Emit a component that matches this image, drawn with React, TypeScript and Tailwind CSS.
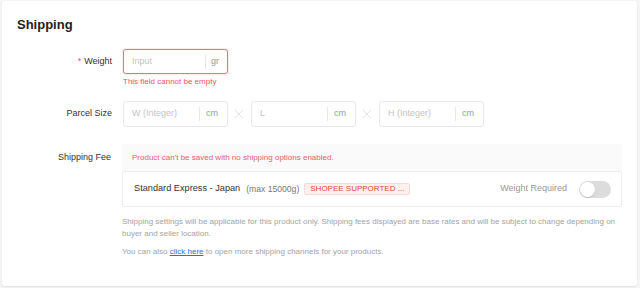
import { X } from "lucide-react";

function SuffixInput({ placeholder, unit, error, suffixPad }: { placeholder: string; unit: string; error?: boolean; suffixPad: string }) {
  return (
    <div
      className={`flex items-center w-[105px] rounded-[3px] border bg-white ${
        error ? "h-[25px] border-[#f4707f] shadow-[0_0_0_1px_rgba(244,112,127,0.15)]" : "h-[26px] border-[#e8e8e8]"
      }`}
    >
      <span className="flex-1 pl-[8px] text-[9px] text-[#c4c4c4]">{placeholder}</span>
      <span className="h-[14px] w-px bg-[#e8e8e8]" />
      <span className={`${suffixPad} text-[9px] text-[#999]`}>{unit}</span>
    </div>
  );
}

export default function App() {
  return (
    <div className="w-[640px] h-[288px] bg-[#f5f5f5] pt-[1px] pl-[2px] font-['Liberation_Sans',Arial,sans-serif]">
      <div className="w-[635px] h-[285px] bg-white rounded-[3px] shadow-[0_1px_2px_rgba(0,0,0,0.08)] pl-[15px] pt-[16px]">
        <h1 className="text-[13px] leading-[16px] font-bold text-[#222]">Shipping</h1>

        {/* Weight */}
        <div className="mt-[16px] flex">
          <div className="w-[95px] h-[25px] flex items-center justify-end text-[9px] text-[#333]">
            <span className="text-[#f0506e] mr-[3px]">*</span>Weight
          </div>
          <div className="ml-[11px]">
            <SuffixInput placeholder="Input" unit="gr" error suffixPad="pl-[5px] pr-[8px]" />
            <p className="mt-[3px] text-[8px] leading-[10px] text-[#f0506e]">This field cannot be empty</p>
          </div>
        </div>

        {/* Parcel size */}
        <div className="mt-[14px] flex items-center">
          <div className="w-[95px] text-right text-[9px] text-[#333]">Parcel Size</div>
          <div className="ml-[11px] flex items-center">
            <SuffixInput placeholder="W (Integer)" unit="cm" suffixPad="pl-[6px] pr-[9px]" />
            <X size={16} strokeWidth={0.9} className="ml-[3px] mr-[4px] text-[#cfcfcf]" />
            <SuffixInput placeholder="L" unit="cm" suffixPad="pl-[6px] pr-[9px]" />
            <X size={16} strokeWidth={0.9} className="ml-[3px] mr-[4px] text-[#cfcfcf]" />
            <SuffixInput placeholder="H (Integer)" unit="cm" suffixPad="pl-[6px] pr-[9px]" />
          </div>
        </div>

        {/* Shipping fee */}
        <div className="mt-[17px] flex">
          <div className="w-[94px] h-[27px] flex items-center justify-end text-[9px] text-[#333]">Shipping Fee</div>
          <div className="ml-[11px] w-[500px]">
            <div className="bg-[#fafafa] rounded-t-[2px]">
              <div className="h-[27px] flex items-center pl-[10px] text-[8px] text-[#e4606d]">
                Product can't be saved with no shipping options enabled.
              </div>
              <div className="h-[36px] flex items-center bg-white border border-[#eeeeee] rounded-[2px] pl-[11px] pr-[10px]">
                <span className="text-[9.2px] text-[#333]">Standard Express - Japan</span>
                <span className="ml-[6px] text-[8.6px] text-[#777]">(max 15000g)</span>
                <span className="ml-[5px] w-[106px] h-[12px] flex items-center pl-[5px] bg-[#fff0f0] border border-[#fbd9d9] rounded-[2px] text-[8px] text-[#d9493c]">
                  SHOPEE SUPPORTED ...
                </span>
                <span className="ml-auto text-[9px] text-[#999]">Weight Required</span>
                <span className="ml-[12px] w-[32px] h-[17px] rounded-full bg-[#dcdcdc] relative">
                  <span className="absolute left-[1px] top-[1px] w-[15px] h-[15px] rounded-full bg-white shadow-[0_1px_1px_rgba(0,0,0,0.15)]" />
                </span>
              </div>
            </div>
            <p className="mt-[9px] text-[8px] leading-[12px] text-[#a3a3a3]">
              Shipping settings will be applicable for this product only. Shipping fees displayed are base rates and will be subject to change depending on buyer and seller location.
            </p>
            <p className="mt-[6px] text-[8px] leading-[12px] text-[#a3a3a3]">
              You can also <span className="text-[#2673dd] underline">click here</span> to open more shipping channels for your products.
            </p>
          </div>
        </div>
      </div>
    </div>
  );
}
